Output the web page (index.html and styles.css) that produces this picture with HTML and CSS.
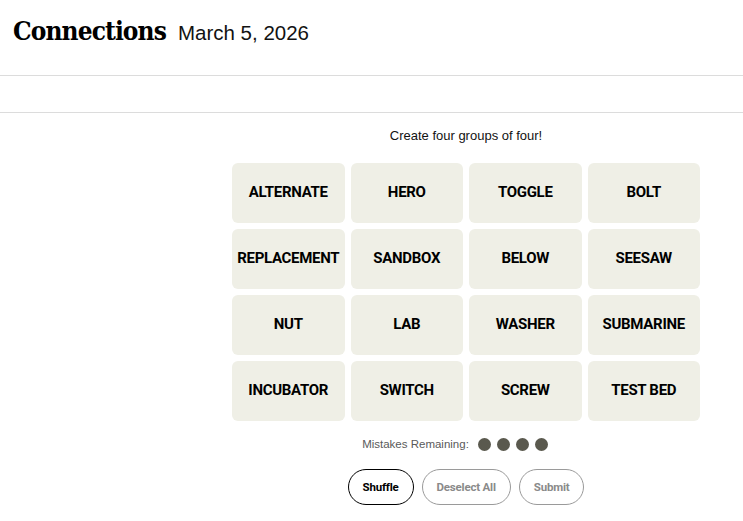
FILE: index.html
```html
<!DOCTYPE html>
<html lang="en">
<head>
<meta charset="utf-8">
<title>Connections</title>
<link rel="stylesheet" href="styles.css">
</head>
<body>
<header class="top">
  <h1 class="title">Connections</h1>
  <span class="date">March 5, 2026</span>
</header>
<div class="subbar"></div>
<main class="page">
  <aside class="side"></aside>
  <section class="game">
    <p class="intro">Create four groups of four!</p>
    <div class="board">
      <button class="tile">ALTERNATE</button>
      <button class="tile">HERO</button>
      <button class="tile">TOGGLE</button>
      <button class="tile">BOLT</button>
      <button class="tile">REPLACEMENT</button>
      <button class="tile">SANDBOX</button>
      <button class="tile">BELOW</button>
      <button class="tile">SEESAW</button>
      <button class="tile">NUT</button>
      <button class="tile">LAB</button>
      <button class="tile">WASHER</button>
      <button class="tile">SUBMARINE</button>
      <button class="tile">INCUBATOR</button>
      <button class="tile">SWITCH</button>
      <button class="tile">SCREW</button>
      <button class="tile">TEST BED</button>
    </div>
    <div class="mistakes">
      <span class="mistakes-label">Mistakes Remaining:</span>
      <span class="dots">
        <span class="dot"></span><span class="dot"></span><span class="dot"></span><span class="dot"></span>
      </span>
    </div>
    <div class="actions">
      <button class="pill pill-active">Shuffle</button>
      <button class="pill">Deselect All</button>
      <button class="pill">Submit</button>
    </div>
  </section>
</main>
</body>
</html>
```

FILE: styles.css
```css
* { box-sizing: border-box; }
html, body { margin: 0; padding: 0; background: #fff; }
body {
  font-family: "Liberation Sans", Arial, sans-serif;
  color: #000;
}
.top {
  height: 76px;
  display: flex;
  align-items: baseline;
  gap: 12px;
  padding: 14px 13px 0;
  border-bottom: 1px solid #dcdcdc;
}
.title {
  margin: 0;
  font-family: "DejaVu Serif", "Liberation Serif", serif;
  font-stretch: condensed;
  font-weight: 900;
  font-size: 26px;
  letter-spacing: -0.9px;
  line-height: 34px;
}
.date {
  font-family: "Liberation Sans", Arial, sans-serif;
  font-size: 20.5px;
  color: #121212;
}
.subbar {
  height: 37px;
  border-bottom: 1px solid #dcdcdc;
}
.page {
  display: grid;
  grid-template-columns: 232px 468px;
}
.game {
  display: flex;
  flex-direction: column;
  align-items: center;
  padding-top: 15px;
}
.intro {
  margin: 0 0 19px;
  font-size: 13px;
  line-height: 16px;
  color: #121212;
}
.board {
  width: 468px;
  display: grid;
  grid-template-columns: repeat(4, 1fr);
  grid-auto-rows: 60px;
  gap: 6px;
}
.tile {
  border: 0;
  border-radius: 6px;
  background: #efefe6;
  font-family: "Roboto", "Liberation Sans", sans-serif;
  font-weight: 700;
  font-size: 15px;
  letter-spacing: -0.3px;
  color: #000;
  padding: 0 0 3px;
}
.mistakes {
  margin-top: 16px;
  height: 14px;
  display: flex;
  align-items: center;
  gap: 9px;
  padding-right: 22px;
}
.mistakes-label {
  font-size: 11.5px;
  color: #5a5a5a;
}
.dots {
  display: flex;
  gap: 6px;
}
.dot {
  width: 13px;
  height: 13px;
  border-radius: 50%;
  background: #5a594e;
}
.actions {
  margin-top: 18px;
  display: flex;
  gap: 8px;
}
.pill {
  height: 36px;
  padding: 0 14px;
  border-radius: 18px;
  border: 1px solid #9a9a9a;
  background: #fff;
  font-family: "Roboto", "Liberation Sans", sans-serif;
  font-weight: 700;
  font-size: 11.5px;
  letter-spacing: -0.2px;
  color: #8a8a8a;
}
.pill-active {
  border-color: #000;
  color: #000;
}
```
